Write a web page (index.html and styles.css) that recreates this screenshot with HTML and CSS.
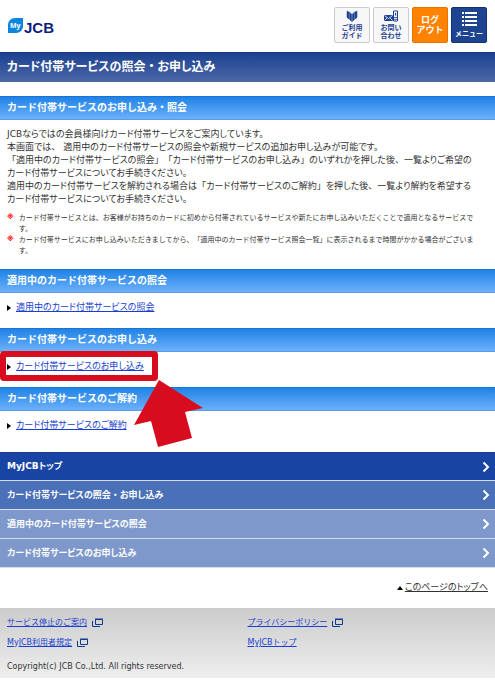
FILE: index.html
```html
<!DOCTYPE html>
<html lang="ja">
<head>
  <meta charset="UTF-8">
  <meta name="viewport" content="width=device-width, initial-scale=1">
  <title>カード付帯サービスの照会・お申し込み | MyJCB</title>
  <link rel="stylesheet" href="styles.css">
</head>

<body>
  <header class="header" id="top">
    <a class="logo" href="#" aria-label="MyJCB">
      <svg class="logo-mark" viewBox="0 0 16 16" aria-hidden="true">
        <path d="M7 0H15V8C15 12 12 15 8 15H0V7C0 3 3 0 7 0Z" fill="#0a86e0"/>
      </svg>
      <span class="logo-my">My</span>
      <span class="logo-jcb">JCB</span>
    </a>
    <div class="header-buttons">
      <button class="btn" type="button">
        <svg width="12" height="12" viewBox="0 0 12 12" aria-hidden="true">
          <path d="M1 1L3 2V9L1 7.500ZM3.600 2.200L5.600 4V11.500L3.600 9.500ZM11 1L9 2V9L11 7.500ZM8.400 2.200L6.400 4V11.500L8.400 9.500Z" fill="#1e4390" stroke="#1e4390" stroke-width=".5"/>
        </svg>
        <span>ご利用<br>ガイド</span>
      </button>
      <button class="btn" type="button">
        <svg width="16" height="12" viewBox="0 0 16 12" aria-hidden="true">
          <path d="M1 5H10V11H1Z" fill="#1e4390"/>
          <path d="M1.500 5.500L5.500 8.500L9.500 5.500M1.500 10.500L4 8M9.500 10.500L7 8" fill="none" stroke="#fff" stroke-width=".8"/>
          <path d="M10.500 1H14.500V11H10.500Z" fill="none" stroke="#1e4390"/>
          <path d="M12 3H13.200V5.500H12Z" fill="#1e4390"/>
          <path d="M11 7.500H14M11 9.300H14" stroke="#1e4390" stroke-width=".8"/>
        </svg>
        <span>お問い<br>合わせ</span>
      </button>
      <button class="btn btn-logout" type="button"><span>ログ<br>アウト</span></button>
      <button class="btn btn-menu" type="button">
        <svg width="15" height="14" viewBox="0 0 15 14" aria-hidden="true">
          <path d="M0 1H2M3 1H15M0 5H2M3 5H15M0 9H2M3 9H15M0 13H2M3 13H15" stroke="#fff" stroke-width="2"/>
        </svg>
        <span>メニュー</span>
      </button>
    </div>
  </header>

  <main>
    <h1>カード付帯サービスの照会<span class="full">・</span>お申し込み</h1>

    <section>
      <h2>カード付帯サービスのお申し込み・照会</h2>
      <p class="lead">
        JCBならではの会員様向けカード付帯サービスをご案内しています。<br>
        本画面では<span class="full">、</span> 適用中のカード付帯サービスの照会や新規サービスの追加お申し込みが可能です。<br>
        <span class="full">「</span>適用中のカード付帯サービスの照会<span class="full">」「</span>カード付帯サービスのお申し込み<span class="full">」</span>のいずれかを押した後<span class="full">、</span>一覧よりご希望の<br>
        カード付帯サービスについてお手続きください。<br>
        適用中のカード付帯サービスを解約される場合は<span class="full">「</span>カード付帯サービスのご解約<span class="full">」</span>を押した後<span class="full">、</span>一覧より解約を希望する<br>
        カード付帯サービスについてお手続きください。
      </p>
      <ul class="notes">
        <li>カード付帯サービスとは、お客様がお持ちのカードに初めから付帯されているサービスや新たにお申し込みいただくことで適用となるサービスです。</li>
        <li>カード付帯サービスにお申し込みいただきましてから、「適用中のカード付帯サービス照会一覧」に表示されるまで時間がかかる場合がございます。</li>
      </ul>
    </section>

    <section>
      <h2>適用中のカード付帯サービスの照会</h2>
      <p class="link-row"><a href="#">適用中のカード付帯サービスの照会</a></p>
    </section>

    <section>
      <h2>カード付帯サービスのお申し込み</h2>
      <p class="link-row marked">
        <a href="#">カード付帯サービスのお申し込み</a>
        <span class="frame"></span>
        <svg class="arrow" width="70" height="68" viewBox="0 0 70 68" aria-hidden="true">
          <path d="M25 0L69 28L51 32L58 58L24 67L17 41L0 45Z" fill="#d70c1e"/>
        </svg>
      </p>
    </section>

    <section>
      <h2>カード付帯サービスのご解約</h2>
      <p class="link-row"><a href="#">カード付帯サービスのご解約</a></p>
    </section>
  </main>

  <nav class="local-nav">
    <a class="nav-top" href="#">
      <span>MyJCBトップ</span>
      <svg width="8" height="12" viewBox="0 0 8 12" aria-hidden="true"><path d="M1.500 1.500L6 6L1.500 10.500"/></svg>
    </a>
    <a class="nav-current" href="#">
      <span>カード付帯サービスの照会<span class="full">・</span>お申し込み</span>
      <svg width="8" height="12" viewBox="0 0 8 12" aria-hidden="true"><path d="M1.500 1.500L6 6L1.500 10.500"/></svg>
    </a>
    <a href="#">
      <span>適用中のカード付帯サービスの照会</span>
      <svg width="8" height="12" viewBox="0 0 8 12" aria-hidden="true"><path d="M1.500 1.500L6 6L1.500 10.500"/></svg>
    </a>
    <a href="#">
      <span>カード付帯サービスのお申し込み</span>
      <svg width="8" height="12" viewBox="0 0 8 12" aria-hidden="true"><path d="M1.500 1.500L6 6L1.500 10.500"/></svg>
    </a>
  </nav>

  <p class="page-top"><a href="#top">このページのトップへ</a></p>

  <footer class="footer">
    <ul class="footer-links">
      <li><a href="#">サービス停止のご案内</a>
        <svg width="11" height="9" viewBox="0 0 11 9" aria-hidden="true"><path d="M3.500 1.500H10.500V6.500H3.500ZM3 1H11M.5 3V8.500H8"/></svg>
      </li>
      <li><a href="#">プライバシーポリシー</a>
        <svg width="11" height="9" viewBox="0 0 11 9" aria-hidden="true"><path d="M3.500 1.500H10.500V6.500H3.500ZM3 1H11M.5 3V8.500H8"/></svg>
      </li>
      <li><a href="#">MyJCB利用者規定</a>
        <svg width="11" height="9" viewBox="0 0 11 9" aria-hidden="true"><path d="M3.500 1.500H10.500V6.500H3.500ZM3 1H11M.5 3V8.500H8"/></svg>
      </li>
      <li><a href="#">MyJCBトップ</a></li>
    </ul>
    <small class="copyright">Copyright(c) JCB Co.,Ltd. All rights reserved.</small>
  </footer>
</body>
</html>
```
FILE: styles.css
```css
* {
  box-sizing: border-box;
}

body {
  margin: 0;
  background-color: #fff;
  color: #333;
  font-family: "DejaVu Sans", "Noto Sans CJK JP", sans-serif;
  font-size: 9px;
  line-height: 13px;
  font-feature-settings: "palt";
  text-spacing-trim: space-all;
}

h1, h2, p, ul {
  margin: 0;
  padding: 0;
}

ul {
  list-style: none;
}

a {
  color: #1a3fd0;
}

/* 約物は全角幅 */
.full {
  font-feature-settings: normal;
}

/* ヘッダー */
.header {
  display: flex;
  justify-content: space-between;
  align-items: flex-start;
  padding: 7px 8px 9px;
}

.logo {
  position: relative;
  display: flex;
  align-items: flex-end;
  margin-top: 11px;
  text-decoration: none;
}

.logo-mark {
  width: 16px;
  height: 16px;
}

.logo-my {
  position: absolute;
  top: 2px;
  left: 2px;
  color: #fff;
  font: bold 7px/11px "Open Sans", sans-serif;
}

.logo-jcb {
  color: #0b1f80;
  font: bold 15px/12px "Liberation Sans", sans-serif;
}

.header-buttons {
  display: flex;
  gap: 3px;
}

.btn {
  display: flex;
  flex-direction: column;
  align-items: center;
  justify-content: center;
  gap: 2px;
  width: 36px;
  height: 36px;
  padding: 0;
  border: 1px solid #c9ccd2;
  border-radius: 2px;
  background-color: #f7f7f8;
  color: #1e4390;
  font-family: inherit;
  font-size: 7px;
  font-weight: bold;
  line-height: 8px;
  cursor: pointer;
}

.btn-logout {
  border-color: #e87400;
  background-color: #ff8200;
  color: #fff;
  font-size: 9px;
  line-height: 10px;
}

.btn-menu {
  gap: 4px;
  border-color: #15336f;
  background-color: #1e4390;
  color: #fff;
}

/* 見出し */
h1 {
  margin-bottom: 14px;
  padding: 0 7px;
  border-top: 1px solid #17387f;
  background: linear-gradient(#1c4190, #4c68a8);
  color: #fff;
  font-size: 12px;
  line-height: 29px;
}

h2 {
  padding: 0 7px;
  border-top: 1px solid #1b74d4;
  border-bottom: 1px solid #5a9be4;
  background: linear-gradient(#2083e6, #6cb0fa);
  color: #fff;
  font-size: 10px;
  line-height: 22px;
  font-feature-settings: normal;
}

.lead {
  padding: 8px 7px 0;
}

.notes {
  padding: 6px 11px 13px 7px;
  font-family: "Noto Sans CJK JP", sans-serif;
  font-size: 7px;
  line-height: 11px;
  font-feature-settings: normal;
}

.notes li {
  display: flex;
  gap: 5px;
}

.notes li::before {
  content: "※";
  color: #f00;
  font-family: "DejaVu Sans", sans-serif;
  font-weight: bold;
}

.link-row {
  display: flex;
  align-items: center;
  gap: 5px;
  padding: 8px 7px 14px;
}

.link-row::before {
  content: "";
  border: 3px solid transparent;
  border-left: 4px solid #000;
  border-right: 0;
}

/* 赤枠と矢印 */
.marked {
  position: relative;
}

.frame {
  position: absolute;
  top: -1px;
  left: 0;
  width: 158px;
  height: 30px;
  border: 6px solid #d70c1e;
  border-radius: 4px;
}

.arrow {
  position: absolute;
  top: 28px;
  left: 134px;
}

/* ナビゲーション */
.local-nav {
  margin-top: 6px;
}

.local-nav a {
  display: flex;
  align-items: center;
  justify-content: space-between;
  padding: 0 5px 0 7px;
  border-bottom: 1px solid #d5def0;
  background-color: #7e98cc;
  color: #fff;
  font-weight: bold;
  line-height: 28px;
  text-decoration: none;
}

.local-nav .nav-top {
  border-top: 1px solid #1a3c93;
  background-color: #1845a3;
  line-height: 27px;
}

.local-nav .nav-current {
  background-color: #4a70b8;
}

.local-nav path {
  fill: none;
  stroke: #fff;
  stroke-width: 2;
}

.page-top {
  display: flex;
  align-items: center;
  justify-content: flex-end;
  gap: 2px;
  padding: 13px 7px 14px;
}

.page-top::before {
  content: "";
  border: 3px solid transparent;
  border-top: 0;
  border-bottom: 4px solid #000;
}

.page-top a {
  color: #333;
}

/* フッター */
.footer {
  padding: 8px 7px 5px;
  background: linear-gradient(#cbcbcb, #eee);
  font-size: 8px;
  font-feature-settings: normal;
}

.footer-links {
  display: grid;
  grid-template-columns: 1fr 1fr;
  row-gap: 7px;
}

.footer-links li {
  display: flex;
  align-items: center;
  gap: 5px;
}

.footer-links path {
  fill: none;
  stroke: #123a8c;
}

.copyright {
  display: block;
  margin-top: 11px;
  font-size: 8px;
}
```
